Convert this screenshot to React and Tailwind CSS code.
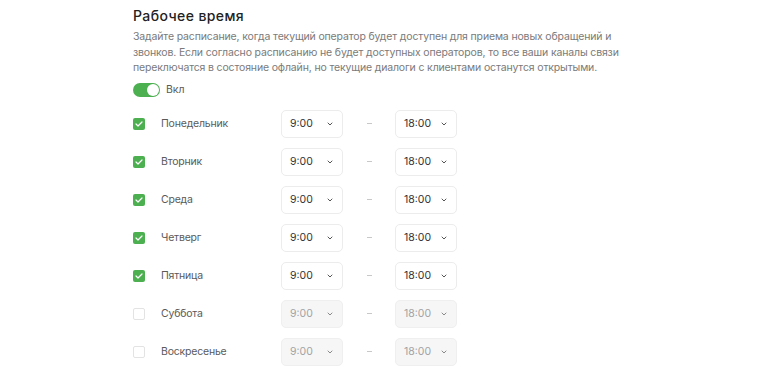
import React from "react";

const days = [
  { name: "Понедельник", on: true },
  { name: "Вторник", on: true },
  { name: "Среда", on: true },
  { name: "Четверг", on: true },
  { name: "Пятница", on: true },
  { name: "Суббота", on: false },
  { name: "Воскресенье", on: false },
];

function Chevron({ className }) {
  return (
    <svg width="6" height="4" viewBox="0 0 6 4" className={className} fill="none">
      <path d="M1 1l2 2 2-2" stroke="currentColor" strokeWidth="1" strokeLinecap="round" strokeLinejoin="round" />
    </svg>
  );
}

function Select({ value, disabled }) {
  return (
    <div
      className={
        "w-[62px] h-[28px] rounded-[5px] border flex items-center justify-between pl-[8px] pr-[9px] text-[10.5px] " +
        (disabled
          ? "bg-[#f6f6f7] border-[#efeff0] text-[#a3a3a3]"
          : "bg-white border-[#ececec] text-[#333333]")
      }
    >
      <span>{value}</span>
      <Chevron className={disabled ? "text-[#8a8a8a]" : "text-[#555555]"} />
    </div>
  );
}

export default function App() {
  return (
    <div
      className="w-[780px] h-[389px] bg-white pl-[133px] pt-[7px] overflow-hidden"
      style={{ fontFamily: "Inter, 'Noto Sans', sans-serif" }}
    >
      <div className="text-[14px] leading-[18px] font-medium text-[#222222] tracking-[0.4px]">Рабочее время</div>
      <div className="mt-[4px] text-[10.5px] leading-[15.5px] text-[#7a7a7a] whitespace-nowrap tracking-[-0.15px]">
        <div>Задайте расписание, когда текущий оператор будет доступен для приема новых обращений и</div>
        <div>звонков. Если согласно расписанию не будет доступных операторов, то все ваши каналы связи</div>
        <div>переключатся в состояние офлайн, но текущие диалоги с клиентами останутся открытыми.</div>
      </div>
      <div className="mt-[7px] flex items-center h-[14px]">
        <div className="w-[27px] h-[14px] rounded-full bg-[#4caf50] relative">
          <div className="absolute right-[1px] top-[1px] w-[12px] h-[12px] rounded-full bg-white" />
        </div>
        <span className="ml-[6px] text-[10.5px] text-[#5a5a5a]">Вкл</span>
      </div>
      <div className="mt-[13px] flex flex-col gap-[10px]">
        {days.map((d) => (
          <div key={d.name} className="flex items-center h-[28px]">
            {d.on ? (
              <div className="w-[12px] h-[12px] rounded-[2px] bg-[#4caf50] flex items-center justify-center">
                <svg width="8" height="6" viewBox="0 0 8 6" fill="none">
                  <path d="M1 3l2 2 4-4" stroke="white" strokeWidth="1.2" strokeLinecap="round" strokeLinejoin="round" />
                </svg>
              </div>
            ) : (
              <div className="w-[12px] h-[12px] rounded-[2px] border border-[#e3e3e3] bg-white" />
            )}
            <span className="ml-[16px] w-[120px] text-[10.5px] tracking-[-0.2px] text-[#5a5a5a]">{d.name}</span>
            <Select value="9:00" disabled={!d.on} />
            <div className="w-[52px] flex justify-center">
              <div className="w-[5px] h-[1px] bg-[#c8c8c8]" />
            </div>
            <Select value="18:00" disabled={!d.on} />
          </div>
        ))}
      </div>
    </div>
  );
}
